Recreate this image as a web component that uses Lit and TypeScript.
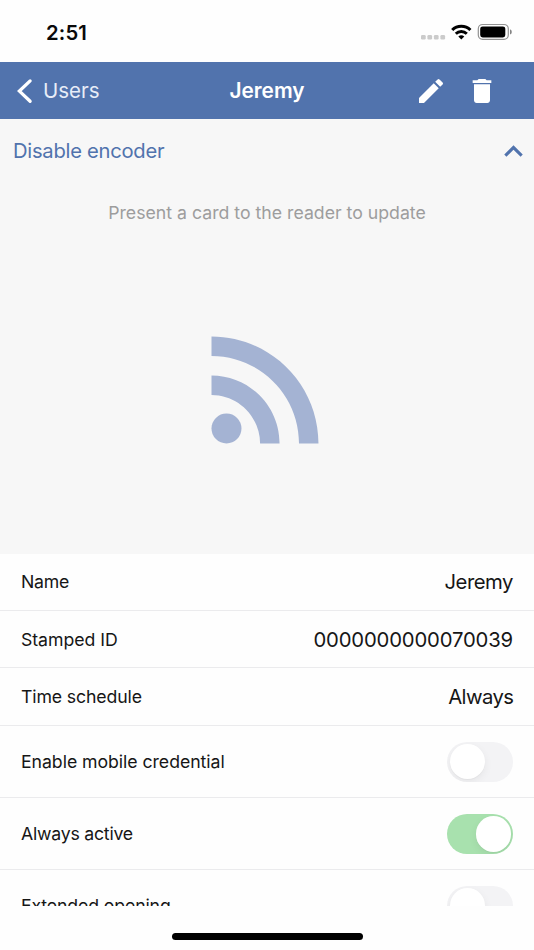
import { LitElement, html, css, svg, nothing } from "lit";
import { customElement, property } from "lit/decorators.js";
import { classMap } from "lit/directives/class-map.js";

@customElement("status-bar")
class StatusBar extends LitElement {
  static styles = css`
    :host { display: flex; height: 62px; flex: none; box-sizing: border-box; padding: 0 21px 0 46px; align-items: center; justify-content: space-between; }
    .time { font-size: 20.3px; font-weight: 600; letter-spacing: 0.15px; line-height: 24px; margin-top: 3px; color: #0a0a0a; }
    .icons { display: block; flex: none; margin-top: 2px; }
  `;
  render() {
    return html`
      <span class="time">2:51</span>
      <svg class="icons" width="94" height="24" viewBox="419 20 94 24">
        <g fill="#cbcbcb">
          ${[421, 427.4, 433.9, 440.4].map((x) => svg`<rect x=${x} y="35" width="4.7" height="4.6" rx="1.3" />`)}
        </g>
        <g fill="none" stroke="#000" stroke-width="3.1">
          <path d="M452.2 30 A13 13 0 0 1 470.4 30" />
          <path d="M455.8 33.8 A7.8 7.8 0 0 1 466.8 33.8" stroke-width="2.9" />
        </g>
        <path d="M461.3 39.6 L458.3 36.6 A4.3 4.3 0 0 1 464.3 36.6 Z" fill="#000" />
        <rect x="478.3" y="24.5" width="30" height="14.9" rx="4.3" fill="none" stroke="#929292" stroke-width="1.2" />
        <rect x="480.2" y="26.4" width="25.1" height="11.1" rx="2.4" fill="#000" />
        <path d="M510 29.3 Q511.8 30 511.8 32 Q511.8 34 510 34.6 Z" fill="#858585" />
      </svg>
    `;
  }
}

@customElement("nav-header")
class NavHeader extends LitElement {
  static styles = css`
    :host { display: grid; grid-template-columns: 1fr auto 1fr; height: 57px; flex: none; align-items: center; background: #5173ad; color: #fff; }
    .back { display: flex; align-items: center; padding-left: 16px; gap: 9px; font-size: 20.5px; line-height: 26px; }
    .title { font-size: 20.8px; font-weight: 600; line-height: 26px; }
    .users { color: #e7edf8; }
    .actions { display: flex; justify-content: flex-end; gap: 19.5px; padding-right: 36px; }
    svg { display: block; flex: none; }
  `;
  render() {
    return html`
      <div class="back">
        <svg width="18" height="28" viewBox="0 0 18 28">
          <path d="M14.1 3.9 L3.4 14.1 L14.1 24.3" fill="none" stroke="#fff" stroke-width="3.3" stroke-linecap="round" />
        </svg>
        <span class="users">Users</span>
      </div>
      <div class="title">Jeremy</div>
      <div class="actions">
        <svg width="32" height="32" viewBox="0 0 24 24" fill="#fff">
          <path d="M3 17.25V21h3.75L17.81 9.94l-3.75-3.75L3 17.25zM20.71 7.04a1 1 0 0 0 0-1.41l-2.34-2.34a1 1 0 0 0-1.41 0l-1.83 1.83 3.75 3.75 1.83-1.83z" />
        </svg>
        <svg width="32" height="32" viewBox="0 0 24 24" fill="#fff">
          <path d="M6 19c0 1.1.9 2 2 2h8c1.1 0 2-.9 2-2V7H6v12zM19 4h-3.5l-1-1h-5l-1 1H5v2h14V4z" />
        </svg>
      </div>
    `;
  }
}

@customElement("encoder-panel")
class EncoderPanel extends LitElement {
  static styles = css`
    :host { display: flex; flex-direction: column; align-items: center; height: 434.5px; flex: none; background: #f7f7f7; }
    .toggle { display: flex; align-self: stretch; height: 64px; align-items: center; justify-content: space-between; padding: 0 1.7px 0 13px; color: #5173ad; font-size: 20.2px; line-height: 26px; }
    .label { letter-spacing: -0.26px; }
    .hint { margin-top: 17px; font-size: 17.7px; line-height: 26px; color: #9d9d9d; }
    .signal { margin: 80px 1px 0 0; display: block; }
    svg { flex: none; }
  `;
  render() {
    return html`
      <div class="toggle">
        <span class="label">Disable encoder</span>
        <svg width="37" height="37" viewBox="0 0 24 24" fill="#5173ad"><path d="M12 8l-6 6 1.41 1.41L12 10.83l4.59 4.58L18 14z" /></svg>
      </div>
      <div class="hint">Present a card to the reader to update</div>
      <svg class="signal" width="165" height="165" viewBox="0 0 24 24" fill="#a4b3d3">
        <circle cx="6.18" cy="17.82" r="2.18" />
        <path d="M4 4.44v2.83c7.03 0 12.73 5.7 12.73 12.73h2.83c0-8.59-6.97-15.56-15.56-15.56zm0 5.66v2.83c3.9 0 7.07 3.17 7.07 7.07h2.83c0-5.47-4.43-9.9-9.9-9.9z" />
      </svg>
    `;
  }
}

@customElement("toggle-switch")
class ToggleSwitch extends LitElement {
  @property({ type: Boolean }) on = false;
  static styles = css`
    :host { display: block; flex: none; }
    .track { display: flex; box-sizing: border-box; width: 66px; height: 40px; padding: 2.3px; border-radius: 20px; background: #f3f3f5; overflow: hidden; }
    .track.on { background: #a8e1ae; justify-content: flex-end; }
    .knob { width: 35.4px; height: 35.4px; border-radius: 50%; background: #fff; box-shadow: 0 3px 8px rgba(0, 0, 0, 0.06), 0 1px 1px rgba(0, 0, 0, 0.03); }
  `;
  render() {
    return html`<div class=${classMap({ track: true, on: this.on })}><div class="knob"></div></div>`;
  }
}

interface Row { label: string; value?: string; on?: boolean; cls: string; }

const rows: Row[] = [
  { label: "Name", value: "Jeremy", cls: "name" },
  { label: "Stamped ID", value: "0000000000070039", cls: "stamped" },
  { label: "Time schedule", value: "Always", cls: "schedule" },
  { label: "Enable mobile credential", on: false, cls: "mobile" },
  { label: "Always active", on: true, cls: "active" },
  { label: "Extended opening", on: false, cls: "extended" },
];

@customElement("app-root")
class AppRoot extends LitElement {
  static styles = css`
    :host { display: flex; flex-direction: column; height: 950px; overflow: hidden; background: #fefefe; font-family: Inter, "Liberation Sans", sans-serif; color: #161616; }
    .list { height: 352.5px; flex: none; overflow: hidden; }
    .row { display: flex; box-sizing: border-box; height: 57.4px; align-items: center; justify-content: space-between; padding: 1px 20.7px 0 21px; border-bottom: 1.5px solid #ebebed; }
    .row.tall { height: 72.2px; }
    .label { font-size: 17.7px; line-height: 24px; }
    .value { font-size: 20.3px; line-height: 26px; }
    .label.name { letter-spacing: -0.25px; }
    .label.stamped { letter-spacing: -0.05px; }
    .label.schedule { letter-spacing: -0.13px; }
    .label.mobile { letter-spacing: -0.05px; }
    .label.active { letter-spacing: -0.23px; }
    .label.extended { letter-spacing: -0.13px; }
    .value.name { letter-spacing: -0.5px; padding-right: 0.4px; }
    .value.stamped { letter-spacing: -0.17px; padding-right: 0.4px; }
    .value.schedule { letter-spacing: -0.6px; }
    .home { flex: 1; display: flex; justify-content: center; align-items: flex-start; padding-top: 27px; }
    .indicator { width: 191px; height: 7px; border-radius: 4px; background: #000; }
  `;
  render() {
    return html`
      <status-bar></status-bar>
      <nav-header></nav-header>
      <encoder-panel></encoder-panel>
      <div class="list">
        ${rows.map((r) => html`
          <div class=${classMap({ row: true, tall: r.on !== undefined })}>
            <span class="label ${r.cls}">${r.label}</span>
            ${r.value ? html`<span class="value ${r.cls}">${r.value}</span>` : nothing}
            ${r.on !== undefined ? html`<toggle-switch ?on=${r.on}></toggle-switch>` : nothing}
          </div>`)}
      </div>
      <div class="home"><div class="indicator"></div></div>
    `;
  }
}
